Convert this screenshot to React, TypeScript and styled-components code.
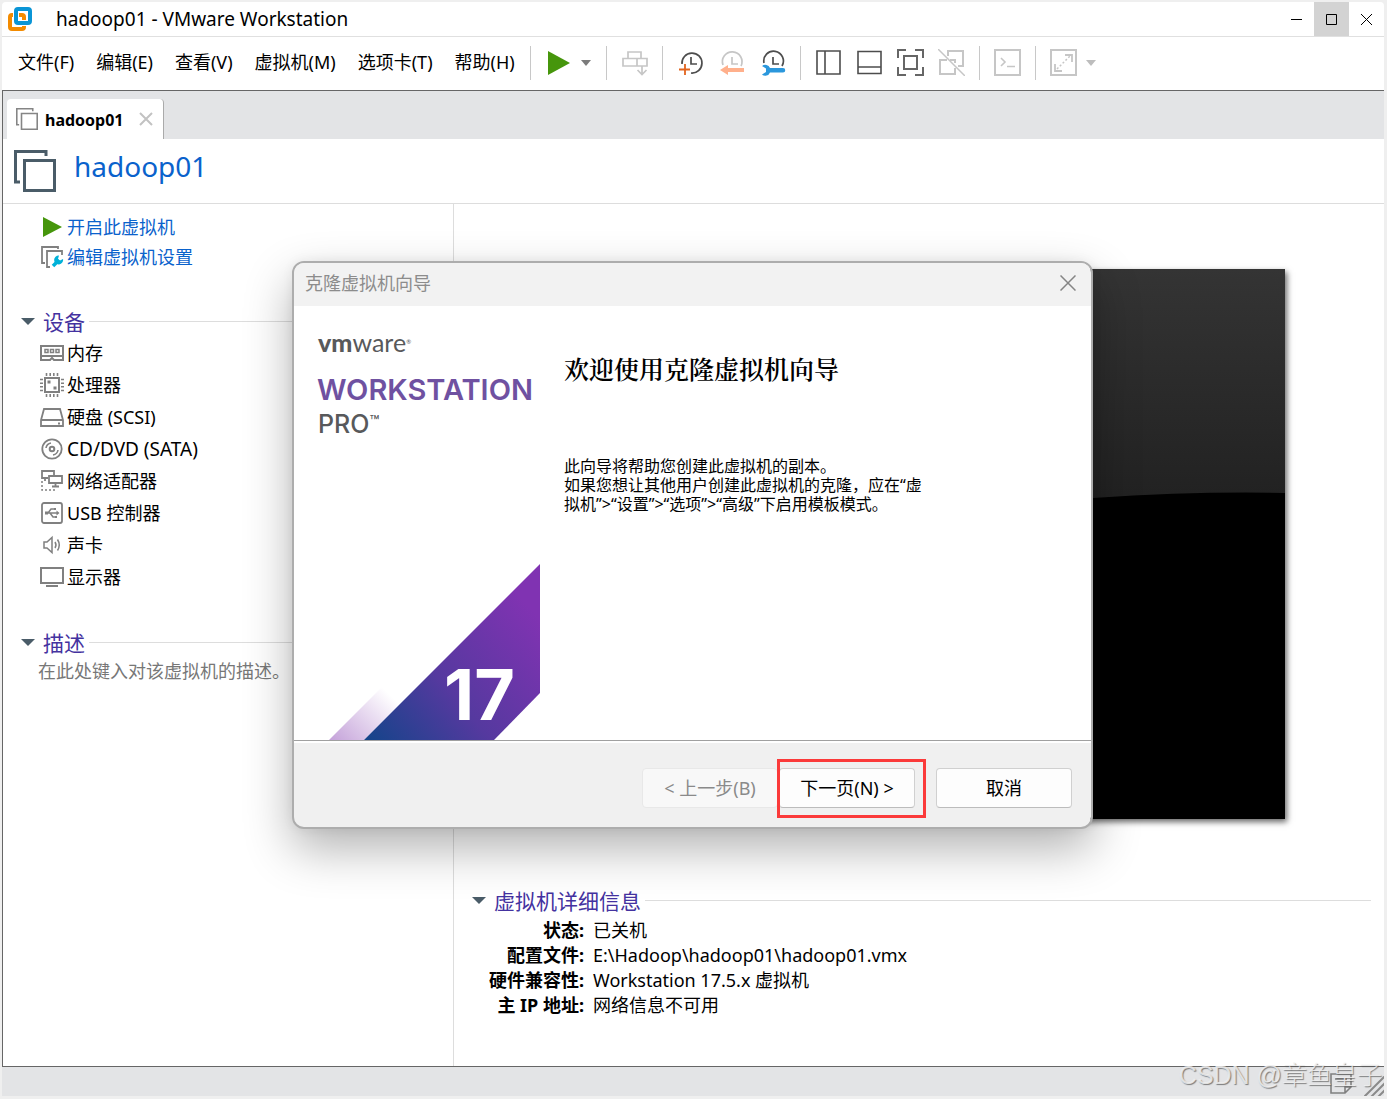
import React from "react";
import styled, { createGlobalStyle } from "styled-components";

const uiFont = `"Noto Sans", "Noto Sans CJK SC", sans-serif`;

const GlobalStyle = createGlobalStyle`
  *, *::before, *::after { box-sizing: border-box; }
  body { margin: 0; background: #efefef; font-family: ${uiFont}; font-size: 18px; line-height: 24px; color: #000; }
  button, textarea { font: inherit; color: inherit; }
  button { background: none; border: 0; padding: 0; }
  h1, h2, h3, p, ul, dl, dd { margin: 0; padding: 0; }
`;

const Frame = styled.div`
  position: relative;
  min-height: 100vh;
  padding: 2px 3px 3px 2px;
  display: flex;
  flex-direction: column;
  background: #efefef;
`;

const TitleBar = styled.header`
  display: flex;
  align-items: center;
  height: 35px;
  padding-left: 5px;
  background: #fff;
  border-bottom: 1px solid #e0e0e0;
  border-radius: 4px 4px 0 0;
`;

const WindowTitle = styled.h1`
  flex: 1;
  margin-left: 23px;
  font-size: 19px;
  font-weight: 400;
`;

const WindowButton = styled.button<{ $active?: boolean }>`
  display: grid;
  place-items: center;
  width: 35px;
  height: 34px;
  background: ${(p) => (p.$active ? "#d3d3d3" : "transparent")};
`;

const CommandBar = styled.div`
  display: flex;
  align-items: center;
  height: 53px;
  padding: 0 0 2px 16px;
  background: #fff;
`;

const Menu = styled.nav`
  display: flex;
  gap: 22px;
  width: 512px;
  padding-bottom: 2px;
  white-space: nowrap;
`;

const MenuItem = styled.button`
  line-height: 26px;
`;

const Toolbar = styled.div`
  display: flex;
  align-items: center;
`;

const ToolGroup = styled.div`
  display: flex;
  align-items: center;
  height: 34px;
  padding: 0 7px;
  border-left: 1px solid #c8c8c8;
`;

const ToolButton = styled.button`
  display: grid;
  place-items: center;
  width: 41px;
  height: 34px;
`;

const DropButton = styled.button`
  display: flex;
  align-items: center;
  width: 20px;
  height: 34px;
  padding-left: 2px;
`;

const Workspace = styled.div`
  flex: 1;
  display: flex;
  flex-direction: column;
  border: solid #666;
  border-width: 1px 0 1px 1px;
  background: #fff;
`;

const TabStrip = styled.div`
  display: flex;
  align-items: flex-end;
  height: 48px;
  padding-left: 4px;
  background: #e3e4e6;
`;

const Tab = styled.div`
  display: flex;
  align-items: center;
  height: 40px;
  padding: 0 10px 0 9px;
  background: #fff;
  border-right: 1px solid #aaa;
  border-radius: 4px 4px 0 0;
`;

const TabLabel = styled.span`
  margin: 0 15px 0 7px;
  padding-top: 2px;
  font-size: 16px;
  font-weight: 700;
`;

const PageHeader = styled.div`
  display: flex;
  align-items: center;
  height: 65px;
  padding-left: 11px;
  border-bottom: 1px solid #ddd;
`;

const PageTitle = styled.h2`
  margin: 0 0 10px 18px;
  font-size: 28px;
  line-height: 36px;
  font-weight: 400;
  color: #0a62cc;
`;

const Columns = styled.div`
  flex: 1;
  display: grid;
  grid-template-columns: 451px minmax(0, 1fr);
`;

const SidePanel = styled.aside`
  padding-top: 8px;
  border-right: 1px solid #ddd;
`;

const ActionLink = styled.a`
  display: flex;
  align-items: center;
  gap: 3px;
  height: 30px;
  padding-left: 37px;
  color: #0a62cc;
  text-decoration: none;
`;

const Section = styled.section`
  margin-top: 34px;
  padding-left: 18px;
`;

const SectionToggle = styled.button`
  display: flex;
  align-items: center;
  gap: 8px;
  width: 100%;
  height: 31px;
  font-size: 21px;
  line-height: 30px;
  color: #4432a0;
  white-space: nowrap;

  &::after {
    content: "";
    flex: 1;
    height: 1px;
    margin-left: -4px;
    background: #ddd;
  }
`;

const DeviceList = styled.ul`
  list-style: none;
`;

const Device = styled.li`
  display: flex;
  align-items: center;
  gap: 3px;
  height: 32px;
  padding-left: 19px;
`;

const DeviceName = styled.span<{ $latin: boolean }>`
  font-size: ${(p) => (p.$latin ? 19 : 18)}px;
`;

const Description = styled.textarea`
  display: block;
  width: 400px;
  height: 60px;
  margin-left: 17px;
  padding: 1px 0;
  border: 0;
  resize: none;
  background: transparent;

  &::placeholder { color: #777; opacity: 1; }
`;

const DetailPanel = styled.main`
  padding: 65px 13px 0 18px;
`;

const Preview = styled.svg`
  display: block;
  width: 100%;
  max-width: 726px;
  height: auto;
  margin: 0 auto 66px;
  box-shadow: 2px 3px 6px rgba(0, 0, 0, 0.6);
`;

const Details = styled.dl`
  display: grid;
  grid-template-columns: 112px 1fr;
  column-gap: 9px;
  margin-top: 2px;
  line-height: 25px;
`;

const DetailName = styled.dt`
  font-weight: 700;
  text-align: right;
  white-space: nowrap;
`;

const StatusBar = styled.footer`
  position: relative;
  display: flex;
  justify-content: flex-end;
  align-items: flex-end;
  gap: 12px;
  height: 29px;
  background: #e3e4e6;
`;

const Watermark = styled.span`
  position: absolute;
  right: 2px;
  bottom: 6px;
  font-family: "Liberation Sans", "Noto Sans CJK SC", sans-serif;
  font-size: 25px;
  line-height: 30px;
  font-weight: 300;
  white-space: nowrap;
  color: rgba(240, 240, 240, 0.85);
  text-shadow: 1px 1px 1px rgba(90, 90, 90, 0.75);
`;

const Overlay = styled.div`
  position: absolute;
  inset: 0;
  display: flex;
  align-items: center;
  justify-content: center;
  padding: 0 2px 9px 0;
`;

const Dialog = styled.div`
  width: 801px;
  border: 2px solid #adadad;
  border-radius: 12px;
  background: #f0f0f0;
  background-clip: padding-box;
  overflow: hidden;
  box-shadow: 0 20px 48px rgba(0, 0, 0, 0.3), 0 0 12px rgba(0, 0, 0, 0.06);
`;

const DialogHeader = styled.div`
  display: flex;
  align-items: center;
  justify-content: space-between;
  height: 43px;
  padding: 0 15px 3px 11px;
  background: #f2f2f2;
`;

const DialogTitle = styled.h2`
  font-size: 18px;
  font-weight: 400;
  color: #8c8c8c;
`;

const CloseButton = styled.button`
  display: grid;
  place-items: center;
  height: 24px;
`;

const DialogBody = styled.div`
  display: flex;
  min-height: 434px;
  background: #fff;
`;

const Banner = styled.div`
  display: flex;
  flex-direction: column;
  width: 246px;
`;

const Wordmark = styled.div`
  padding: 20px 0 0 24px;
  font-family: Lato, sans-serif;
  font-size: 25px;
  line-height: 32px;
  color: #58595b;

  b { font-weight: 900; }
  sup { font-size: 6px; line-height: 8px; vertical-align: 8px; }
`;

const Product = styled.div`
  padding: 15px 0 0 23px;
  font-family: Inter, sans-serif;
  font-size: 29px;
  line-height: 34px;
  font-weight: 600;
  color: #6f51a1;
`;

const Edition = styled.div`
  padding-left: 24px;
  font-family: Inter, sans-serif;
  font-size: 25px;
  line-height: 34px;
  font-weight: 500;
  color: #58595b;

  sup { font-size: 16px; line-height: 16px; vertical-align: 6px; }
`;

const BannerArt = styled.svg`
  display: block;
  margin-top: auto;
`;

const Welcome = styled.div`
  flex: 1;
  padding: 46px 24px 0;
`;

const WelcomeTitle = styled.h3`
  font-family: "Noto Serif CJK SC", "Noto Sans CJK SC", serif;
  font-size: 25px;
  line-height: 32px;
  font-weight: 600;
`;

const WelcomeText = styled.p`
  margin-top: 73px;
  font-size: 16px;
  line-height: 19px;
  white-space: nowrap;
`;

const DialogFooter = styled.div`
  display: flex;
  justify-content: flex-end;
  align-items: center;
  height: 87px;
  padding: 8px 19px 0 0;
  border-top: 1px solid #a0a0a0;
  box-shadow: inset 0 2px 0 #fff;
`;

const PushButton = styled.button<{ $gap?: number }>`
  width: 136px;
  height: 40px;
  margin-left: ${(p) => p.$gap ?? 0}px;
  border: 1px solid #d0d0d0;
  border-bottom-color: #bcbcbc;
  border-radius: 4px;
  background: #fdfdfd;

  &:disabled {
    color: #8a8a8a;
    border-color: #e8e8e8;
    background: #f8f8f8;
  }
`;

const Highlight = styled.div`
  position: relative;
  margin-left: 1px;

  &::after {
    content: "";
    position: absolute;
    inset: -9px -11px -10px -2px;
    border: 3px solid #fb3a3a;
    pointer-events: none;
  }
`;

type ArrowProps = { color: string; width?: number; height?: number };
const DownArrow = ({ color, width = 10, height = 6 }: ArrowProps) => (
  <svg width={width} height={height} viewBox="0 0 10 6" preserveAspectRatio="none" aria-hidden="true">
    <path d="M0 0H10L5 6Z" fill={color} />
  </svg>
);

const VmIcon = ({ size, color, stroke }: { size: number; color: string; stroke: number }) => (
  <svg width={size} height={size} viewBox="0 0 42 42" fill="none" stroke={color} strokeWidth={stroke} aria-hidden="true">
    <path d="M32 6V1.5H1.5V32H6M10.500 10.500H40.500V40.500H10.500Z" />
  </svg>
);

const DeviceIcon = ({ children }: { children: React.ReactNode }) => (
  <svg width="24" height="24" viewBox="0 0 24 24" fill="none" stroke="#808080" strokeWidth="2" aria-hidden="true">
    {children}
  </svg>
);

const devices: { name: string; latin?: boolean; icon: React.ReactNode }[] = [
  {
    name: "内存",
    icon: (
      <>
        <path d="M1 5H23V19H14L12 17L10 19H1ZM1 15H23" />
        <path d="M5 8.500h3v3h-3zM10.500 8.500h3v3h-3zM16 8.500h3v3h-3z" strokeWidth="1.5" />
      </>
    ),
  },
  {
    name: "处理器",
    icon: (
      <>
        <path d="M5 5H19V19H5Z" />
        <path d="M6.500 0v3M10.200 0v3M13.800 0v3M17.500 0v3M6.500 21v3M10.200 21v3M13.800 21v3M17.500 21v3M0 6.500h3M0 10.200h3M0 13.800h3M0 17.500h3M21 6.500h3M21 10.200h3M21 13.800h3M21 17.500h3" strokeWidth="1.6" />
        <path d="M7.500 9h3M13.500 15h3" strokeWidth="3" />
      </>
    ),
  },
  { name: "硬盘 (SCSI)", icon: <path d="M4 4H20L23 15V21H1V15ZM1 15H23M18 18.500h2" strokeWidth="1.8" /> },
  {
    name: "CD/DVD (SATA)",
    latin: true,
    icon: (
      <>
        <circle cx="12" cy="12" r="9.700" strokeWidth="1.8" />
        <circle cx="12" cy="12" r="2.300" />
        <path d="M6 11A6 6 0 0 1 11 6M18 13A6 6 0 0 1 13 18" strokeWidth="1.6" />
      </>
    ),
  },
  {
    name: "网络适配器",
    icon: (
      <>
        <path d="M8 9H2V2H14V6" strokeWidth="1.800" />
        <path d="M9 7H22V14H9ZM15.500 14V17M12 17.500H19M5 9v3" strokeWidth="1.800" />
        <path d="M2 12V21H15" strokeDasharray="2 2" strokeWidth="1.500" />
      </>
    ),
  },
  {
    name: "USB 控制器",
    icon: (
      <>
        <rect x="2" y="2" width="20" height="20" rx="2" strokeWidth="1.800" />
        <path d="M6 12H18M8 12L11 8H14M10 12L13 16H15" strokeWidth="1.500" />
        <path d="M5 10.500h3v3h-3zM14 7h2v2h-2zM15 15h2v2h-2zM16.500 9.500L19.500 12L16.500 14.500Z" fill="#808080" stroke="none" />
      </>
    ),
  },
  {
    name: "声卡",
    icon: <path d="M4 9H7L12 4.500V19.500L7 15H4ZM15 9Q17 12 15 15M17.500 6.500Q21 12 17.500 17.500" strokeWidth="1.500" />,
  },
  { name: "显示器", icon: <path d="M1 3H23V18H1ZM6 21H18" /> },
];

const menuItems = ["文件(F)", "编辑(E)", "查看(V)", "虚拟机(M)", "选项卡(T)", "帮助(H)"];

const details = [
  ["状态:", "已关机"],
  ["配置文件:", "E:\\Hadoop\\hadoop01\\hadoop01.vmx"],
  ["硬件兼容性:", "Workstation 17.5.x 虚拟机"],
  ["主 IP 地址:", "网络信息不可用"],
];

const dark = "#4d4d4d";
const faint = "#c6c6c6";

const MainToolbar = () => (
  <Toolbar role="toolbar" aria-label="工具栏">
    <ToolGroup>
      <ToolButton aria-label="开启">
        <svg width="22" height="24" viewBox="0 0 22 24"><path d="M0 0L22 12L0 24Z" fill="#46960c" /></svg>
      </ToolButton>
      <DropButton aria-label="电源选项"><DownArrow color="#7b7b7b" /></DropButton>
    </ToolGroup>
    <ToolGroup>
      <ToolButton aria-label="发送 Ctrl+Alt+Del">
        <svg width="26" height="26" viewBox="0 0 26 26" fill="none" stroke={faint} strokeWidth="1.700">
          <path d="M6 8V2H19V8M1 8.500H25V16H1ZM15 9V16M20 16V24M15.500 20L20 24.500L24.500 20" />
        </svg>
      </ToolButton>
    </ToolGroup>
    <ToolGroup>
      <ToolButton aria-label="拍摄快照">
        <svg width="26" height="26" viewBox="0 0 26 26" fill="none">
          <path d="M4 14A10 10 0 1 1 13 23M13 7v7h6" stroke={dark} strokeWidth="1.700" />
          <path d="M7 14V25M1 19.500H12" stroke="#e2641e" strokeWidth="1.800" />
        </svg>
      </ToolButton>
      <ToolButton aria-label="恢复快照">
        <svg width="26" height="26" viewBox="0 0 26 26" fill="none">
          <path d="M4 15A9.800 9.800 0 1 1 22 16M13 7v7h6" stroke={faint} strokeWidth="1.700" />
          <path d="M1 20L9 15V18H25V22H9V25Z" fill="#ffb08c" />
        </svg>
      </ToolButton>
      <ToolButton aria-label="管理快照">
        <svg width="26" height="26" viewBox="0 0 26 26" fill="none">
          <path d="M4 13A9.800 9.800 0 1 1 22 16M13 7v7h6" stroke={dark} strokeWidth="1.700" />
          <path d="M2 16A5 5 0 0 1 10 18H23A2 2 0 0 1 23 22.500H10A5 5 0 0 1 2 24.500L6 22V18.500Z" fill="#2b97dc" />
        </svg>
      </ToolButton>
    </ToolGroup>
    <ToolGroup>
      <ToolButton aria-label="显示库">
        <svg width="25" height="25" viewBox="0 0 25 25" fill="none" stroke={dark} strokeWidth="1.600"><path d="M1 1H24V24H1ZM9 1V24" /></svg>
      </ToolButton>
      <ToolButton aria-label="显示缩略图栏">
        <svg width="25" height="25" viewBox="0 0 25 25" fill="none" stroke={dark} strokeWidth="1.600"><path d="M1 1.500H24V23.500H1ZM1 17H24" /></svg>
      </ToolButton>
      <ToolButton aria-label="全屏">
        <svg width="27" height="27" viewBox="0 0 27 27" fill="none" stroke="#666" strokeWidth="2">
          <path d="M1 9V1H9M18 1H26V9M26 18V26H18M9 26H1V18M7 7H20V20H7Z" />
        </svg>
      </ToolButton>
      <ToolButton aria-label="Unity">
        <svg width="27" height="27" viewBox="0 0 27 27" fill="none" stroke={faint} strokeWidth="2">
          <path d="M10 7V2H25V17H20M9 11H2V25H17V19M12 11H17V14" />
          <path d="M0 0L27 27" strokeWidth="1.500" />
        </svg>
      </ToolButton>
    </ToolGroup>
    <ToolGroup>
      <ToolButton aria-label="控制台">
        <svg width="27" height="27" viewBox="0 0 27 27" fill="none" stroke={faint} strokeWidth="2">
          <path d="M1 1H26V26H1Z" /><path d="M7 9L11 13L7 17M13 17.500H21" strokeWidth="1.600" />
        </svg>
      </ToolButton>
    </ToolGroup>
    <ToolGroup>
      <ToolButton aria-label="自由拉伸">
        <svg width="27" height="27" viewBox="0 0 27 27" fill="none" stroke={faint} strokeWidth="2">
          <path d="M1 1H26V26H1Z" /><path d="M15 6H22V13M5 15V22H12" strokeWidth="1.800" /><path d="M7 20L20 7" strokeWidth="1.500" strokeDasharray="2 2" />
        </svg>
      </ToolButton>
      <DropButton aria-label="拉伸选项"><DownArrow color="#bdbdbd" /></DropButton>
    </ToolGroup>
  </Toolbar>
);

const CloneWizard = () => (
  <Overlay>
    <Dialog role="dialog" aria-labelledby="wizard-title">
      <DialogHeader>
        <DialogTitle id="wizard-title">克隆虚拟机向导</DialogTitle>
        <CloseButton aria-label="关闭向导">
          <svg width="16" height="16" viewBox="0 0 16 16" stroke="#858585" strokeWidth="1.500"><path d="M0.500 0.500L15.500 15.500M15.500 0.500L0.500 15.500" /></svg>
        </CloseButton>
      </DialogHeader>
      <DialogBody>
        <Banner>
          <Wordmark><b>vm</b>ware<sup>®</sup></Wordmark>
          <Product>WORKSTATION</Product>
          <Edition>PRO<sup>™</sup></Edition>
          <BannerArt width="246" height="177" viewBox="0 0 246 177">
            <defs>
              <linearGradient id="blade" gradientUnits="userSpaceOnUse" x1="80" y1="185" x2="240" y2="50">
                <stop offset="0" stopColor="#15448a" />
                <stop offset="0.45" stopColor="#55399f" />
                <stop offset="1" stopColor="#8033b2" />
              </linearGradient>
              <linearGradient id="trail" gradientUnits="userSpaceOnUse" x1="40" y1="180" x2="92" y2="128">
                <stop offset="0" stopColor="#c5a3da" />
                <stop offset="1" stopColor="#fff" />
              </linearGradient>
            </defs>
            <path d="M35 177L93 119L128 119L70 177Z" fill="url(#trail)" />
            <path d="M70 177L246 1V130L200 177Z" fill="url(#blade)" />
            <text x="150" y="157" fontFamily="Inter, sans-serif" fontWeight="700" fontSize="70" fill="#fff">17</text>
          </BannerArt>
        </Banner>
        <Welcome>
          <WelcomeTitle>欢迎使用克隆虚拟机向导</WelcomeTitle>
          <WelcomeText>
            此向导将帮助您创建此虚拟机的副本。<br />
            如果您想让其他用户创建此虚拟机的克隆，应在“虚<br />
            拟机”&gt;“设置”&gt;“选项”&gt;“高级”下启用模板模式。
          </WelcomeText>
        </Welcome>
      </DialogBody>
      <DialogFooter>
        <PushButton disabled>&lt; 上一步(B)</PushButton>
        <Highlight><PushButton>下一页(N) &gt;</PushButton></Highlight>
        <PushButton $gap={21}>取消</PushButton>
      </DialogFooter>
    </Dialog>
  </Overlay>
);

export default function App() {
  return (
    <Frame>
      <GlobalStyle />
      <TitleBar>
        <svg width="26" height="26" viewBox="0 0 26 26" fill="none" aria-hidden="true">
          <rect x="3" y="9" width="14" height="14" rx="2" stroke="#f38b00" strokeWidth="4" />
          <rect x="9" y="3" width="14" height="14" rx="2" stroke="#fff" strokeWidth="6" />
          <rect x="9" y="3" width="14" height="14" rx="2" stroke="#0a95d6" strokeWidth="4" />
          <path d="M12 9H17V14" stroke="#f38b00" strokeWidth="2" />
        </svg>
        <WindowTitle>hadoop01 - VMware Workstation</WindowTitle>
        <WindowButton aria-label="最小化">
          <svg width="12" height="11" stroke="#000"><path d="M0 5.500H11" /></svg>
        </WindowButton>
        <WindowButton $active aria-label="最大化">
          <svg width="12" height="11" stroke="#000" fill="none"><path d="M0.500 0.500H10.500V10.500H0.500Z" /></svg>
        </WindowButton>
        <WindowButton aria-label="关闭">
          <svg width="12" height="11" stroke="#000"><path d="M0 0L11 11M11 0L0 11" /></svg>
        </WindowButton>
      </TitleBar>
      <CommandBar>
        <Menu aria-label="主菜单">
          {menuItems.map((item) => <MenuItem key={item}>{item}</MenuItem>)}
        </Menu>
        <MainToolbar />
      </CommandBar>
      <Workspace>
        <TabStrip>
          <Tab>
            <VmIcon size={22} color="#858585" stroke={3} />
            <TabLabel>hadoop01</TabLabel>
            <CloseButton aria-label="关闭标签页">
              <svg width="14" height="14" stroke="#c2c2c2" strokeWidth="2"><path d="M1 1L13 13M13 1L1 13" /></svg>
            </CloseButton>
          </Tab>
        </TabStrip>
        <PageHeader>
          <VmIcon size={42} color="#4a5c68" stroke={3} />
          <PageTitle>hadoop01</PageTitle>
        </PageHeader>
        <Columns>
          <SidePanel>
            <ActionLink href="#power-on">
              <svg width="24" height="22" viewBox="0 0 24 22"><path d="M3 1L22 11L3 21Z" fill="#46960c" /></svg>
              开启此虚拟机
            </ActionLink>
            <ActionLink href="#settings">
              <svg width="24" height="24" viewBox="0 0 24 24" fill="none" stroke="#808080" strokeWidth="1.800">
                <path d="M18 4V2H2V18H5M10 22H7V6H22V10" />
                <path d="M13 21L19 15" stroke="#00b1d8" strokeWidth="3.500" />
                <path d="M23 14A4.500 4.500 0 1 1 19 10.500L18 14L20 15.500Z" fill="#00b1d8" stroke="none" />
              </svg>
              编辑虚拟机设置
            </ActionLink>
            <Section>
              <SectionToggle aria-expanded="true"><DownArrow color="#4a5c68" width={14} height={7} />设备</SectionToggle>
              <DeviceList>
                {devices.map((d) => (
                  <Device key={d.name}>
                    <DeviceIcon>{d.icon}</DeviceIcon>
                    <DeviceName $latin={!!d.latin}>{d.name}</DeviceName>
                  </Device>
                ))}
              </DeviceList>
            </Section>
            <Section>
              <SectionToggle aria-expanded="true"><DownArrow color="#4a5c68" width={14} height={7} />描述</SectionToggle>
              <Description aria-label="描述" placeholder="在此处键入对该虚拟机的描述。" />
            </Section>
          </SidePanel>
          <DetailPanel>
            <Preview viewBox="0 0 726 550" role="img" aria-label="虚拟机屏幕">
              <defs>
                <linearGradient id="gloss" x1="0" y1="0" x2="0" y2="1">
                  <stop offset="0" stopColor="#343434" />
                  <stop offset="1" stopColor="#1c1c1c" />
                </linearGradient>
              </defs>
              <path d="M0 0H726V550H0Z" fill="#000" />
              <path d="M0 0H726V224Q640 222 534 229Q260 250 0 300Z" fill="url(#gloss)" />
            </Preview>
            <SectionToggle aria-expanded="true"><DownArrow color="#4a5c68" width={14} height={7} />虚拟机详细信息</SectionToggle>
            <Details>
              {details.map(([name, value]) => (
                <React.Fragment key={name}><DetailName>{name}</DetailName><dd>{value}</dd></React.Fragment>
              ))}
            </Details>
          </DetailPanel>
        </Columns>
      </Workspace>
      <StatusBar>
        <svg width="22" height="28" viewBox="0 0 22 28" fill="none" stroke="#808080" strokeWidth="1.600" aria-hidden="true">
          <path d="M1 6H21V19L15 25H1ZM21 19H15V25M5 11H17" />
        </svg>
        <svg width="20" height="20" viewBox="0 0 20 20" stroke="#8a8a8a" strokeWidth="2" aria-hidden="true">
          <path d="M0 21L21 0M7 21L21 7M14 21L21 14" />
        </svg>
        <Watermark>CSDN @章鱼皇子</Watermark>
      </StatusBar>
      <CloneWizard />
    </Frame>
  );
}
